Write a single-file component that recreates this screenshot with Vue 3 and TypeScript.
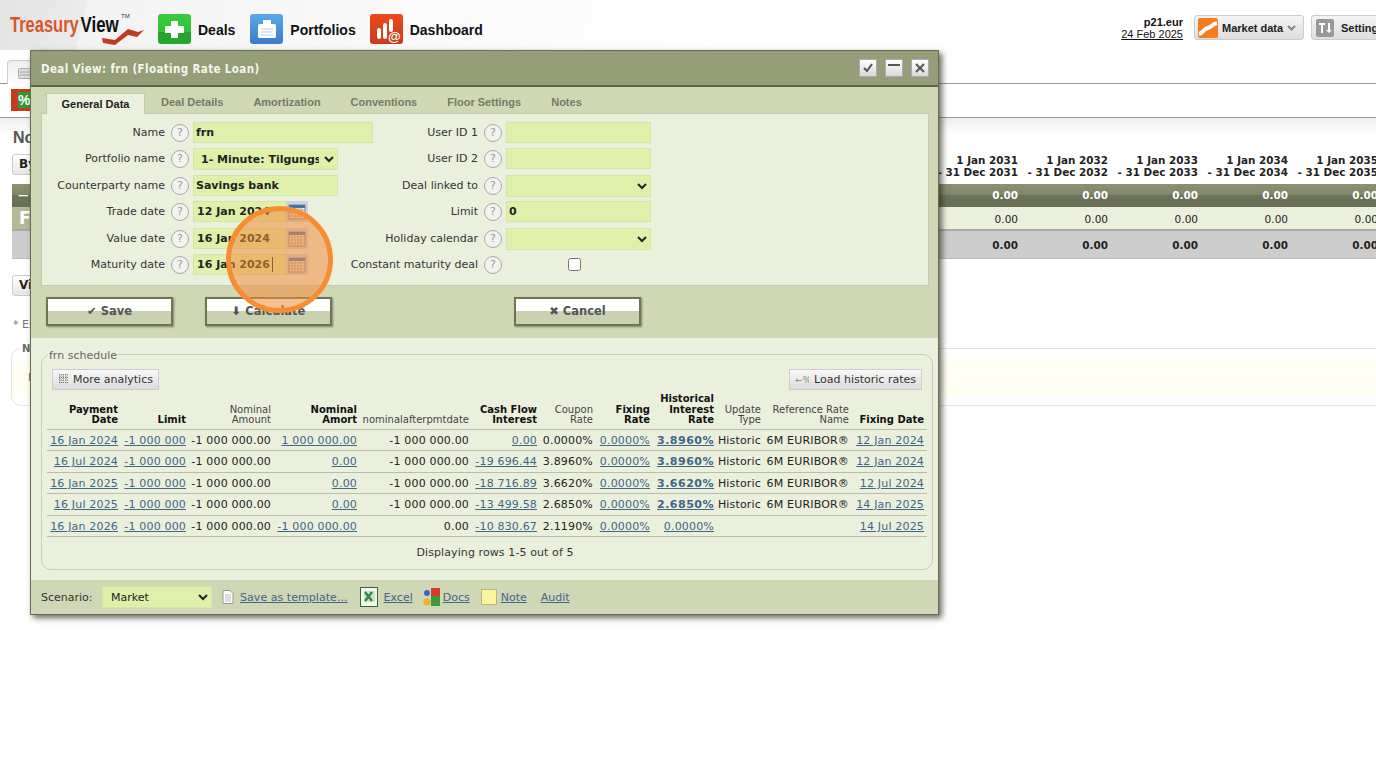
<script setup lang="ts">
interface Row {
  pay: string; limit: string; nominal: string; amort: string; after: string;
  cf: string; coupon: string; fixing: string; hist: string; histBold: boolean;
  update: string; ref: string; fixDate: string;
}
const H = 'Historic';
const E = '6M EURIBOR®';
const L = '-1 000 000';
const N = '-1 000 000.00';
const Z = '0.0000%';
const rows: Row[] = [
  { pay: '16 Jan 2024', limit: L, nominal: N, amort: '1 000 000.00', after: N, cf: '0.00', coupon: Z, fixing: Z, hist: '3.8960%', histBold: true, update: H, ref: E, fixDate: '12 Jan 2024' },
  { pay: '16 Jul 2024', limit: L, nominal: N, amort: '0.00', after: N, cf: '-19 696.44', coupon: '3.8960%', fixing: Z, hist: '3.8960%', histBold: true, update: H, ref: E, fixDate: '12 Jan 2024' },
  { pay: '16 Jan 2025', limit: L, nominal: N, amort: '0.00', after: N, cf: '-18 716.89', coupon: '3.6620%', fixing: Z, hist: '3.6620%', histBold: true, update: H, ref: E, fixDate: '12 Jul 2024' },
  { pay: '16 Jul 2025', limit: L, nominal: N, amort: '0.00', after: N, cf: '-13 499.58', coupon: '2.6850%', fixing: Z, hist: '2.6850%', histBold: true, update: H, ref: E, fixDate: '14 Jan 2025' },
  { pay: '16 Jan 2026', limit: L, nominal: N, amort: '-1 000 000.00', after: '0.00', cf: '-10 830.67', coupon: '2.1190%', fixing: Z, hist: Z, histBold: false, update: '', ref: '', fixDate: '14 Jul 2025' },
];
const years = [2031, 2032, 2033, 2034, 2035];
const tabs = ['Deal Details', 'Amortization', 'Conventions', 'Floor Settings', 'Notes'];
const colWidths = [74, 68, 85, 86, 112, 68, 56, 57, 64, 47, 88, 75];
const calGrid = [0, 1, 2, 3];
</script>

<template>
  <div class="page">
    <header class="hdr">
      <svg class="logo" width="150" height="50" viewBox="0 0 150 50">
        <text transform="translate(10 32) scale(.75 1)" class="logo-t">Treasury</text>
        <text transform="translate(80.5 32) scale(.77 1)" class="logo-v">View</text>
        <text x="121" y="18" class="logo-tm">TM</text>
        <path d="M102 38 L115 40 L128 29 L138 32 L144 30 L137 37 L128 35 L115 45 L103 43 Z" fill="#c23a20" />
      </svg>
      <nav class="nav">
        <a class="nav-item">
          <svg width="33" height="30" viewBox="0 0 33 30">
            <defs><linearGradient id="g1" x1="0" y1="0" x2="0" y2="1"><stop offset="0" stop-color="#3ccb3e" /><stop offset=".6" stop-color="#33bf36" /><stop offset=".6" stop-color="#22a52a" /><stop offset="1" stop-color="#27a82d" /></linearGradient></defs>
            <rect width="33" height="30" rx="3" fill="url(#g1)" />
            <path d="M13 7h7v5h6v7h-6v5h-7v-5H7v-7h6z" fill="#fff" />
          </svg>
          <span>Deals</span>
        </a>
        <a class="nav-item">
          <svg width="33" height="30" viewBox="0 0 33 30">
            <defs><linearGradient id="g2" x1="0" y1="0" x2="0" y2="1"><stop offset="0" stop-color="#5ba8ea" /><stop offset="1" stop-color="#3a7cc8" /></linearGradient></defs>
            <rect width="33" height="30" rx="3" fill="url(#g2)" />
            <rect x="8" y="10" width="18" height="14" rx="1.5" fill="#fff" />
            <rect x="13" y="6" width="8" height="5" fill="#fff" />
            <path d="M11 15h12M11 18h12M11 21h12" stroke="#b9d2ea" />
          </svg>
          <span>Portfolios</span>
        </a>
        <a class="nav-item dash">
          <svg width="33" height="30" viewBox="0 0 33 30">
            <defs><linearGradient id="g3" x1="0" y1="0" x2="0" y2="1"><stop offset="0" stop-color="#ee4a1c" /><stop offset="1" stop-color="#c83c1a" /></linearGradient></defs>
            <rect width="33" height="30" rx="3" fill="url(#g3)" />
            <rect x="7" y="14" width="4" height="11" rx="2" fill="#fff" />
            <rect x="13" y="9" width="4" height="16" rx="2" fill="#fff" />
            <rect x="19" y="5" width="4" height="13" rx="2" fill="#fff" />
            <text x="18" y="27" class="at">@</text>
          </svg>
          <span>Dashboard</span>
        </a>
      </nav>
      <div class="hdr-right">
        <div class="who"><b>p21.eur</b><u>24 Feb 2025</u></div>
        <div class="hbtn market">
          <svg width="20" height="20" viewBox="0 0 20 20">
            <rect width="20" height="20" rx="2" fill="#f57d1f" />
            <path d="M1 16 C6 15 6 10 10 10 C13 10 14 6 19 5" stroke="#fff" stroke-width="4" fill="none" />
          </svg>
          <span>Market data</span>
          <svg width="9" height="6" viewBox="0 0 9 6"><path d="M1 1l3.5 3.5L8 1" stroke="#888" stroke-width="2" fill="none" /></svg>
        </div>
        <div class="hbtn settings">
          <svg width="18" height="18" viewBox="0 0 18 18">
            <rect width="18" height="18" rx="2" fill="#999" />
            <path d="M3 4h6v2H7v8H5V6H3zM12 4h2v7h2l-3 3-3-3h2z" fill="#fff" />
          </svg>
          <span>Settings</span>
        </div>
      </div>
    </header>

    <div class="tabrow">
      <div class="bgtab">
        <svg width="14" height="13" viewBox="0 0 14 13"><rect x=".5" y="2.5" width="13" height="10" rx="1" fill="#ddd" stroke="#aaa" /><path d="M2 6h10M2 9h10" stroke="#aaa" /></svg>
      </div>
    </div>
    <div class="toolrow"><span class="pct">%</span></div>

    <main class="content">
      <h1 class="title">Notional</h1>
      <div class="bg-row bg-head">
        <span class="bg-btn">By</span>
        <div v-for="y in years" :key="y" class="bg-cell">1 Jan {{ y }}<br />- 31 Dec {{ y }}</div>
      </div>
      <div class="bg-row bg-dark">
        <span class="bg-first">—</span>
        <div v-for="y in years" :key="y" class="bg-cell">0.00</div>
      </div>
      <div class="bg-row bg-light">
        <span class="bg-f">F</span>
        <div v-for="y in years" :key="y" class="bg-cell">0.00</div>
      </div>
      <div class="bg-row bg-total">
        <div v-for="y in years" :key="y" class="bg-cell">0.00</div>
      </div>
      <span class="bg-btn view">View</span>
      <p class="foot-note">* Estimated</p>
      <section class="notes">
        <h2 class="notes-title">Notes</h2>
        <div class="notes-body">N</div>
      </section>
    </main>

    <div class="dialog">
      <div class="dlg-title">
        <span class="dlg-name">Deal View: frn (Floating Rate Loan)</span>
        <div class="dlg-btns">
          <span class="wbtn"><svg width="12" height="12" viewBox="0 0 12 12"><path d="M2 6l3 3 5-7" stroke="#555" stroke-width="2" fill="none" /></svg></span>
          <span class="wbtn"><svg width="12" height="12" viewBox="0 0 12 12"><path d="M0 3h12" stroke="#555" stroke-width="2" fill="none" /></svg></span>
          <span class="wbtn"><svg width="12" height="12" viewBox="0 0 12 12"><path d="M2 2l8 8M10 2l-8 8" stroke="#555" stroke-width="2" fill="none" /></svg></span>
        </div>
      </div>

      <div class="dlg-tabs">
        <span class="tab active">General Data</span>
        <span v-for="t in tabs" :key="t" class="tab">{{ t }}</span>
      </div>

      <div class="form-panel">
        <div class="form-col left">
          <label>Name</label><i class="help">?</i><input class="fld wide" value="frn" readonly />
          <label>Portfolio name</label><i class="help">?</i>
          <select class="fld sel pf"><option>1- Minute: Tilgungsdarlehen</option></select>
          <label>Counterparty name</label><i class="help">?</i><input class="fld" value="Savings bank" readonly />
          <template v-for="d in [['Trade date','12 Jan 2024'],['Value date','16 Jan 2024'],['Maturity date','16 Jan 2026']]" :key="d[0]">
            <label>{{ d[0] }}</label><i class="help">?</i>
            <div class="date">
              <input class="fld" :value="d[1]" readonly />
              <span v-if="d[0] === 'Maturity date'" class="caret"></span>
              <svg class="cal" width="22" height="21" viewBox="0 0 22 21">
                <rect width="22" height="21" fill="#c9d3e2" />
                <rect x="3" y="4" width="16" height="14" fill="#f4f0e6" stroke="#8a8a8a" />
                <rect x="3" y="4" width="16" height="3" fill="#4b6fb0" />
                <path v-for="n in calGrid" :key="n" :d="`M${6 + n * 3} 7v11M3 ${9 + n * 3}h16`" stroke="#b7a58f" />
              </svg>
            </div>
          </template>
        </div>
        <div class="form-col right">
          <label>User ID 1</label><i class="help">?</i><input class="fld" readonly />
          <label>User ID 2</label><i class="help">?</i><input class="fld" readonly />
          <label>Deal linked to</label><i class="help">?</i><select class="fld sel"><option></option></select>
          <label>Limit</label><i class="help">?</i><input class="fld" value="0" readonly />
          <label>Holiday calendar</label><i class="help">?</i><select class="fld sel"><option></option></select>
          <label>Constant maturity deal</label><i class="help">?</i>
          <div class="chk"><input type="checkbox" /></div>
        </div>
      </div>

      <div class="actions">
        <button class="bigbtn">✔ Save</button>
        <button class="bigbtn calc">⬇ Calculate</button>
        <button class="bigbtn cancel">✖ Cancel</button>
      </div>

      <div class="lower">
        <fieldset class="sched">
          <legend>frn schedule</legend>
          <div class="sched-bar">
            <button class="smbtn more">
              <svg width="11" height="11" viewBox="0 0 11 11"><path d="M1 1h9M1 3.5h9M1 6h9M1 8.5h9M2 0v10M5 0v10M8 0v10" stroke="#777" stroke-dasharray="1 1" /></svg>
              More analytics
            </button>
            <button class="smbtn">
              <span class="pc">←%</span>
              Load historic rates
            </button>
          </div>
          <table class="grid">
            <colgroup><col v-for="(w, i) in colWidths" :key="i" :style="{ width: w + 'px' }" /></colgroup>
            <thead>
              <tr>
                <th class="b">Payment<br />Date</th>
                <th class="b">Limit</th>
                <th>Nominal<br />Amount</th>
                <th class="b">Nominal<br />Amort</th>
                <th>nominalafterpmtdate</th>
                <th class="b">Cash Flow<br />Interest</th>
                <th>Coupon<br />Rate</th>
                <th class="b">Fixing<br />Rate</th>
                <th class="b">Historical<br />Interest<br />Rate</th>
                <th>Update<br />Type</th>
                <th>Reference Rate<br />Name</th>
                <th class="b">Fixing Date</th>
              </tr>
            </thead>
            <tbody>
              <tr v-for="r in rows" :key="r.pay">
                <td><a>{{ r.pay }}</a></td>
                <td><a>{{ r.limit }}</a></td>
                <td>{{ r.nominal }}</td>
                <td><a>{{ r.amort }}</a></td>
                <td>{{ r.after }}</td>
                <td><a>{{ r.cf }}</a></td>
                <td>{{ r.coupon }}</td>
                <td><a>{{ r.fixing }}</a></td>
                <td><a :class="{ strong: r.histBold }">{{ r.hist }}</a></td>
                <td>{{ r.update }}</td>
                <td>{{ r.ref }}</td>
                <td><a>{{ r.fixDate }}</a></td>
              </tr>
            </tbody>
          </table>
          <p class="count">Displaying rows 1-5 out of 5</p>
        </fieldset>
      </div>

      <div class="dlg-foot">
        <span class="sc">Scenario:</span>
        <select class="fld sel scen"><option>Market</option></select>
        <svg class="ico-doc" width="12" height="14" viewBox="0 0 12 14"><path d="M1 .5h7l3 3v10H1z" fill="#fff" stroke="#999" /><path d="M3 5h6M3 7h6M3 9h6M3 11h6" stroke="#bbb" /></svg>
        <a class="lnk tmpl">Save as template...</a>
        <svg class="ico-xl" width="18" height="20" viewBox="0 0 18 20">
          <rect x=".5" y=".5" width="17" height="19" fill="#f4f6ee" stroke="#2f6b3a" />
          <rect x="4" y="4" width="11" height="11" fill="#cfe0c6" />
          <path d="M5 5l7 9M12 5l-7 9" stroke="#2a8a48" stroke-width="2.4" />
        </svg>
        <a class="lnk xl">Excel</a>
        <svg class="ico-gd" width="17" height="18" viewBox="0 0 17 18">
          <rect x="8" y="0" width="9" height="8" fill="#d93a2b" />
          <rect x="8" y="8" width="9" height="10" fill="#3c9a3c" />
          <circle cx="4" cy="5" r="3" fill="#3b66c4" />
          <circle cx="4" cy="14" r="3.6" fill="#e8b32a" />
        </svg>
        <a class="lnk gd">Docs</a>
        <span class="ico-note"></span>
        <a class="lnk note">Note</a>
        <a class="lnk audit">Audit</a>
      </div>
    </div>

    <div class="spot"></div>
  </div>
</template>

<style scoped>
.page {
  position: relative;
  width: 1376px;
  height: 769px;
  overflow: hidden;
  background: #fff;
  font-family: "DejaVu Sans", Verdana, sans-serif;
  font-size: 11px;
  color: #222;
}
.hdr {
  height: 50px;
  display: flex;
  align-items: flex-start;
  background: linear-gradient(104deg, #e3e3e3 0, #ebebeb 85px, #f3f3f3 86px, #fafafa 400px, #fff 700px);
}
.logo { flex: none; margin-right: 8px; }
.logo-t { font: bold 22px "Liberation Sans", sans-serif; fill: #d9552a; }
.logo-v { font: bold 22px "Liberation Sans", sans-serif; fill: #111; }
.logo-tm { font: 6px "Liberation Sans", sans-serif; fill: #333; }
.at { font: bold 13px "Liberation Sans", sans-serif; fill: #fff; }
.nav { display: flex; gap: 15px; padding-top: 14px; }
.nav-item {
  display: flex;
  align-items: center;
  gap: 7px;
  height: 30px;
  font: bold 14px "Liberation Sans", sans-serif;
  color: #111;
}
.nav-item span { padding-top: 2px; }
.nav-item.dash { margin-left: -1px; }
.hdr-right {
  margin-left: auto;
  margin-right: -25px;
  display: flex;
  gap: 7px;
  padding-top: 15px;
}
.who {
  display: flex;
  flex-direction: column;
  align-items: flex-end;
  margin-right: 4px;
  padding-top: 1px;
  font: 11px/12px "Liberation Sans", sans-serif;
  color: #111;
}
.hbtn {
  height: 25px;
  box-sizing: border-box;
  border: 1px solid #ccc;
  border-radius: 3px;
  background: linear-gradient(#f4f4f4, #dedede);
  display: flex;
  align-items: center;
  font: bold 11px "Liberation Sans", sans-serif;
  color: #222;
  white-space: nowrap;
}
.market { width: 110px; padding-left: 3px; gap: 4px; }
.settings { width: 90px; padding-left: 4px; gap: 7px; }

.tabrow { height: 34px; box-sizing: border-box; border-bottom: 1px solid #999; padding: 10px 0 0 7px; }
.bgtab {
  width: 40px;
  height: 24px;
  box-sizing: border-box;
  border: 1px solid #ccc;
  border-bottom: 0;
  border-radius: 4px 4px 0 0;
  padding: 5px 0 0 10px;
  background: linear-gradient(#eee, #fff);
}
.toolrow { height: 34px; box-sizing: border-box; border-bottom: 1px solid #999; padding: 5px 0 0 11px; }
.pct {
  display: block;
  width: 30px;
  height: 22px;
  box-sizing: border-box;
  border: 3px solid #c63a1e;
  border-left-width: 7px;
  background: #2e9c33;
  color: #fff;
  font: bold 14px/16px "Liberation Sans", sans-serif;
}
.content {
  padding: 9px 0 0 12px;
  background: linear-gradient(#eee 0, #fff 16px) no-repeat;
}
.title { margin: 1px 0 5px; padding-left: 1px; height: 20px; font: bold 16px/20px "Liberation Sans", sans-serif; color: #555; }
.bg-row { display: flex; justify-content: flex-end; width: 1366px; position: relative; }
.bg-cell { width: 90px; text-align: right; flex: none; }
.bg-head { height: 31px; font-weight: 700; font-size: 10.4px; line-height: 11.5px; padding-top: 2px; box-sizing: border-box; color: #222; }
.bg-btn {
  display: block;
  box-sizing: border-box;
  width: 60px;
  height: 21px;
  border: 1px solid #ccc;
  border-radius: 3px;
  padding-left: 6px;
  background: linear-gradient(#fff, #e6e6e6);
  font: bold 12px/19px "DejaVu Sans", sans-serif;
  color: #222;
}
.bg-head .bg-btn { position: absolute; left: 0; top: 1px; }
.bg-dark {
  height: 23px;
  line-height: 23px;
  background: linear-gradient(#8a9272, #80886a 45%, #6c7358 50%, #686f54);
  color: #fff;
  font-weight: 700;
  font-size: 10.4px;
}
.bg-first { position: absolute; left: 6px; }
.bg-light { height: 24px; line-height: 25px; background: #ebf0dc; border-bottom: 2px solid #aaa; box-sizing: border-box; font-size: 10.5px; }
.bg-f { position: absolute; left: 0; top: 0; width: 60px; height: 22px; background: #b4ba96; color: #fff; font: bold 17px/22px "DejaVu Sans", sans-serif; padding-left: 7px; box-sizing: border-box; }
.bg-total { height: 28px; line-height: 29px; background: #cdcdcd; border-bottom: 1px solid #bbb; box-sizing: border-box; font-weight: 700; font-size: 10.4px; }
.view { margin-top: 16px; }
.foot-note { margin: 22px 0 0; padding-left: 1px; height: 14px; line-height: 14px; color: #777; }
.notes {
  margin: 16px 0 0 -1px;
  width: 1500px;
  height: 58px;
  box-sizing: border-box;
  border: 1px solid #e4e4e4;
  border-radius: 10px 0 0 10px;
  position: relative;
}
.notes-title { position: absolute; left: 8px; top: -6px; margin: 0; padding: 0 2px; background: #fff; font-size: 10px; color: #666; }
.notes-body { margin: 11px 0 0; height: 36px; background: #fffff3; color: #666; padding-left: 16px; line-height: 36px; }

.dialog {
  position: absolute;
  left: 30px;
  top: 50px;
  width: 909px;
  height: 565px;
  box-sizing: border-box;
  border: 1px solid #666d50;
  box-shadow: 3px 3px 6px rgba(40, 40, 30, .7);
  background: #d0d7b4;
  display: flex;
  flex-direction: column;
}
.dlg-title {
  height: 36px;
  flex: none;
  box-sizing: border-box;
  border-bottom: 2px solid #5f6648;
  background: #959e76;
  display: flex;
  align-items: center;
  justify-content: space-between;
  padding: 0 9px 0 10px;
  font-family: "DejaVu Sans Condensed", "DejaVu Sans", sans-serif;
  font-weight: 700;
  font-size: 11.5px;
  letter-spacing: .37px;
  color: #f4f6ea;
}
.dlg-name { padding-top: 2px; }
.dlg-btns { display: flex; gap: 8px; }
.wbtn {
  width: 18px;
  height: 18px;
  box-sizing: border-box;
  border: 1px solid #aab;
  background: linear-gradient(#fff, #d8d8d8);
  display: flex;
  align-items: center;
  justify-content: center;
}
.dlg-tabs {
  height: 26px;
  flex: none;
  box-sizing: border-box;
  padding: 6px 0 0 15px;
  display: flex;
  font: bold 11px "Liberation Sans", sans-serif;
  color: #757b68;
}
.tab { padding: 3px 15px 0; }
.tab.active {
  width: 99px;
  box-sizing: border-box;
  height: 21px;
  padding: 4px 0 0;
  margin-right: 1px;
  text-align: center;
  background: #ebf0dc;
  border: 1px solid #c5cbb0;
  border-bottom: 0;
  color: #222;
  position: relative;
  z-index: 1;
}
.form-panel {
  margin: 0 9px 0 10px;
  height: 173px;
  flex: none;
  box-sizing: border-box;
  border: 1px solid #c5cbb0;
  background: #ebf0dc;
  padding-top: 8px;
  display: flex;
  position: relative;
}
.form-col {
  display: grid;
  grid-auto-rows: 26.4px;
  align-items: start;
}
.form-col.left { grid-template-columns: 129px 22px 145px; width: 302px; }
.form-col.right { grid-template-columns: 140px 22px 145px; }
.form-col label { text-align: right; padding-right: 6px; line-height: 21px; color: #333; white-space: nowrap; }
.help {
  width: 16px;
  height: 16px;
  margin-top: 2px;
  border: 1px solid #aaa;
  border-radius: 50%;
  background: #f2f2ee;
  font: 11px/16px "DejaVu Sans", sans-serif;
  color: #999;
  text-align: center;
}
.fld {
  width: 145px;
  height: 21px;
  box-sizing: border-box;
  border: 1px solid #d6e5a6;
  background: #dff0aa;
  padding: 0 2px;
  font: bold 11px "DejaVu Sans", sans-serif;
  color: #222;
  outline: 0;
  border-radius: 0;
}
.fld.wide { width: 180px; }
.sel { height: 22px; }
.pf { padding-left: 3px; }
.date { display: flex; position: relative; }
.date .fld { width: 93px; padding-left: 3px; }
.caret { position: absolute; left: 79px; top: 3px; width: 1px; height: 15px; background: #222; }
.cal { flex: none; }
.chk { width: 145px; text-align: center; }
.chk input { margin: 4px 0 0 -8px; width: 13px; height: 13px; }
.actions { height: 52px; flex: none; padding: 11px 0 0 15px; box-sizing: border-box; display: flex; }
.bigbtn {
  width: 127px;
  height: 29px;
  box-sizing: border-box;
  border: 2px solid #6d7552;
  background: linear-gradient(#fff 50%, #c9d1af 50%);
  box-shadow: 1px 1px 2px rgba(0, 0, 0, .4);
  font: bold 11.5px "DejaVu Sans", sans-serif;
  color: #555;
  padding: 0 0 2px;
}
.calc { margin-left: 32px; }
.cancel { margin-left: 182px; }
.lower {
  height: 242px;
  flex: none;
  box-sizing: border-box;
  background: #ebf0dc;
  padding: 10px 5px 0 10px;
}
.sched {
  margin: 0;
  height: 222px;
  box-sizing: border-box;
  border: 1px solid #c9cdb9;
  border-radius: 10px;
  padding: 8px 5px 0;
  min-width: 0;
}
.sched legend { padding: 0 1px; margin-left: 1px; font-size: 11px; line-height: 13px; color: #666; position: relative; top: 1px; }
.sched-bar { display: flex; justify-content: space-between; padding: 0 5px; }
.smbtn {
  height: 21px;
  box-sizing: border-box;
  border: 1px solid #ccc;
  background: linear-gradient(#f8f8f8, #dcdcdc);
  display: flex;
  align-items: center;
  gap: 5px;
  padding: 0 5px;
  font: 11px "DejaVu Sans", sans-serif;
  color: #333;
}
.smbtn.more { gap: 4px; }
.pc { width: 14px; font-size: 9px; color: #888; white-space: nowrap; overflow: hidden; }
.grid { width: 880px; table-layout: fixed; border-collapse: collapse; }
.grid th {
  height: 39px;
  box-sizing: border-box;
  padding: 0 3px 3px 0;
  vertical-align: bottom;
  text-align: right;
  font: 10px/10.5px "DejaVu Sans", sans-serif;
  color: #444;
  white-space: nowrap;
  border-bottom: 1px solid #b8beaa;
}
.grid th.b { font-weight: 700; color: #111; }
.grid td {
  height: 21.5px;
  box-sizing: border-box;
  padding: 1px 3px 0 0;
  text-align: right;
  white-space: nowrap;
  letter-spacing: .17px;
  border-bottom: 1px solid #b8beaa;
  color: #222;
}
.grid a, .lnk { color: #3f6688; text-decoration: underline; }
.grid a.strong { font-weight: 700; letter-spacing: .5px; }
.count { margin: 9px 0 0; text-align: center; padding-left: 16px; line-height: 14px; color: #333; letter-spacing: .1px; }
.dlg-foot {
  flex: 1;
  display: flex;
  align-items: center;
  padding-left: 10px;
  background: #d0d7b4;
}
.sc { width: 61px; color: #333; }
.scen { width: 110px; font-weight: 400; padding-left: 4px; }
.ico-doc { margin-left: 10px; }
.tmpl { margin-left: 6px; letter-spacing: .05px; }
.ico-xl { margin-left: 12px; }
.xl { margin-left: 6px; }
.ico-gd { margin-left: 10px; }
.gd { margin-left: 3px; }
.ico-note { width: 16px; height: 16px; margin-left: 11px; background: #fbf59b; border: 1px solid #b7b78a; box-sizing: border-box; }
.note { margin-left: 4px; }
.audit { margin-left: 14px; }
.spot {
  position: absolute;
  left: 226px;
  top: 206px;
  width: 107px;
  height: 107px;
  box-sizing: border-box;
  border: 5px solid #f68d33;
  border-radius: 50%;
  background: rgba(240, 140, 60, .55);
}
</style>
